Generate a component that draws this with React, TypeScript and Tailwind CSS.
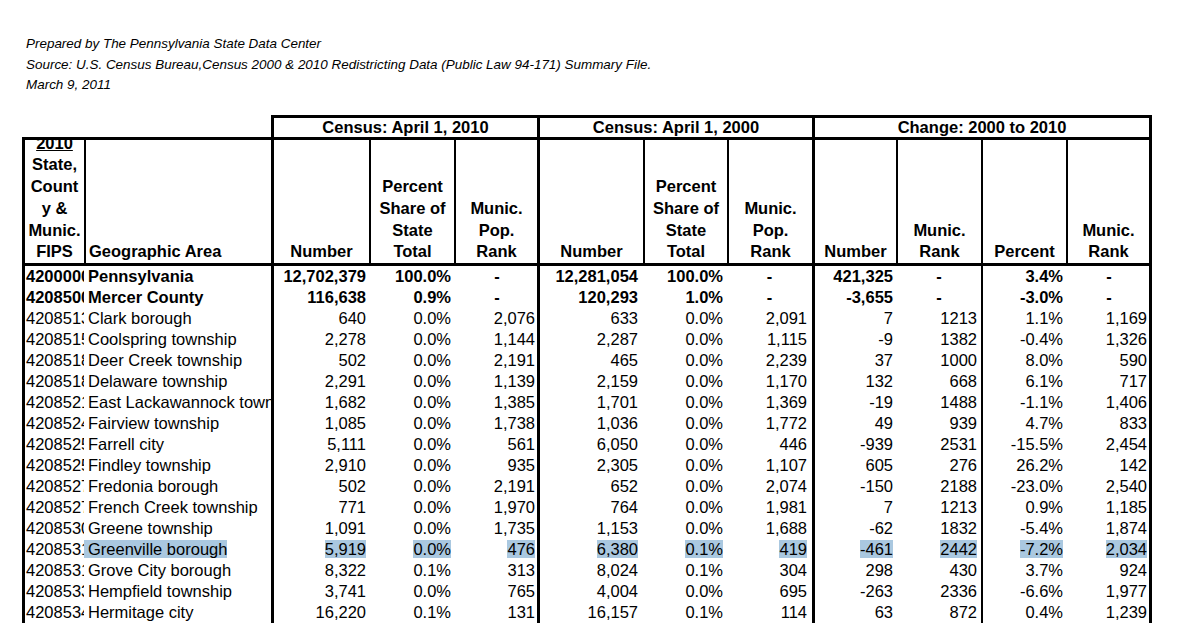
import React from "react";

type Row = {
  fips: string;
  name: string;
  v: string[];
  bold?: boolean;
  hl?: boolean;
};

const rows: Row[] = [
  { fips: "4200000000", name: "Pennsylvania", v: ["12,702,379", "100.0%", "-", "12,281,054", "100.0%", "-", "421,325", "-", "3.4%", "-"], bold: true },
  { fips: "4208500000", name: "Mercer County", v: ["116,638", "0.9%", "-", "120,293", "1.0%", "-", "-3,655", "-", "-3.0%", "-"], bold: true },
  { fips: "4208513784", name: "Clark borough", v: ["640", "0.0%", "2,076", "633", "0.0%", "2,091", "7", "1213", "1.1%", "1,169"] },
  { fips: "4208515560", name: "Coolspring township", v: ["2,278", "0.0%", "1,144", "2,287", "0.0%", "1,115", "-9", "1382", "-0.4%", "1,326"] },
  { fips: "4208518392", name: "Deer Creek township", v: ["502", "0.0%", "2,191", "465", "0.0%", "2,239", "37", "1000", "8.0%", "590"] },
  { fips: "4208518936", name: "Delaware township", v: ["2,291", "0.0%", "1,139", "2,159", "0.0%", "1,170", "132", "668", "6.1%", "717"] },
  { fips: "4208521248", name: "East Lackawannock township", v: ["1,682", "0.0%", "1,385", "1,701", "0.0%", "1,369", "-19", "1488", "-1.1%", "1,406"] },
  { fips: "4208524416", name: "Fairview township", v: ["1,085", "0.0%", "1,738", "1,036", "0.0%", "1,772", "49", "939", "4.7%", "833"] },
  { fips: "4208525112", name: "Farrell city", v: ["5,111", "0.0%", "561", "6,050", "0.0%", "446", "-939", "2531", "-15.5%", "2,454"] },
  { fips: "4208525744", name: "Findley township", v: ["2,910", "0.0%", "935", "2,305", "0.0%", "1,107", "605", "276", "26.2%", "142"] },
  { fips: "4208527720", name: "Fredonia borough", v: ["502", "0.0%", "2,191", "652", "0.0%", "2,074", "-150", "2188", "-23.0%", "2,540"] },
  { fips: "4208527960", name: "French Creek township", v: ["771", "0.0%", "1,970", "764", "0.0%", "1,981", "7", "1213", "0.9%", "1,185"] },
  { fips: "4208530800", name: "Greene township", v: ["1,091", "0.0%", "1,735", "1,153", "0.0%", "1,688", "-62", "1832", "-5.4%", "1,874"] },
  { fips: "4208531136", name: "Greenville borough", v: ["5,919", "0.0%", "476", "6,380", "0.1%", "419", "-461", "2442", "-7.2%", "2,034"], hl: true },
  { fips: "4208531296", name: "Grove City borough", v: ["8,322", "0.1%", "313", "8,024", "0.1%", "304", "298", "430", "3.7%", "924"] },
  { fips: "4208533048", name: "Hempfield township", v: ["3,741", "0.0%", "765", "4,004", "0.0%", "695", "-263", "2336", "-6.6%", "1,977"] },
  { fips: "4208534064", name: "Hermitage city", v: ["16,220", "0.1%", "131", "16,157", "0.1%", "114", "63", "872", "0.4%", "1,239"] },
];

// classes for value columns (col2..col11)
const valCls = [
  "border-l-[3px] border-black pr-[3px]",
  "pr-[3px]",
  "pr-[2px]",
  "border-l-[3px] border-black pr-[5px]",
  "pr-[4px]",
  "pr-[5px]",
  "border-l-[3px] border-black pr-[3px]",
  "pr-[4px]",
  "border-l-2 border-black pr-[3px]",
  "border-r-[3px] border-black pr-[2px]",
];

const GRID =
  "grid grid-cols-[62px_187px_98px_85px_83px_106px_84px_85px_84px_85px_85px_86px]";

function HeadCell({ lines, cls }: { lines: React.ReactNode[]; cls: string }) {
  return (
    <div className={`flex flex-col justify-end items-center text-center overflow-hidden ${cls}`}>
      {lines.map((l, i) => (
        <div key={i} className="whitespace-nowrap">
          {l}
        </div>
      ))}
    </div>
  );
}

export default function App() {
  return (
    <div className="w-[1184px] h-[623px] overflow-hidden bg-white text-black font-['Liberation_Sans',Arial,Helvetica,sans-serif]">
      <div className="pl-[22px] pt-[34px]">
        <div className="pl-[4px] italic text-[13.45px] leading-[20.5px]">
          <div>Prepared by The Pennsylvania State Data Center</div>
          <div>Source: U.S. Census Bureau,Census 2000 &amp; 2010 Redistricting Data (Public Law 94-171) Summary File.</div>
          <div>March 9, 2011</div>
        </div>

        <div className="mt-[19.5px] w-[1130px] text-[16.5px]">
          {/* group header row */}
          <div className={`${GRID} h-[22px] font-bold leading-[19px]`}>
            <div className="col-span-2" />
            <div className="col-span-3 border-l-[3px] border-t-[3px] border-black text-center">Census: April 1, 2010</div>
            <div className="col-span-3 border-l-[3px] border-t-[3px] border-black text-center">Census: April 1, 2000</div>
            <div className="col-span-4 border-l-[3px] border-t-[3px] border-r-[3px] border-black text-center">Change: 2000 to 2010</div>
          </div>

          {/* column header row */}
          <div className={`${GRID} h-[129px] border-y-[3px] border-black font-bold leading-[21.7px]`}>
            <HeadCell
              cls="border-l-[3px] border-black"
              lines={[<span className="underline">2010</span>, "State,", "Count", "y &", "Munic.", "FIPS"]}
            />
            <div className="border-l-2 border-black flex flex-col justify-end pl-[3px]">
              <div className="whitespace-nowrap">Geographic Area</div>
            </div>
            <HeadCell cls="border-l-[3px] border-black" lines={["Number"]} />
            <HeadCell cls="border-l-2 border-black" lines={["Percent", "Share of", "State", "Total"]} />
            <HeadCell cls="border-l-2 border-black" lines={["Munic.", "Pop.", "Rank"]} />
            <HeadCell cls="border-l-[3px] border-black" lines={["Number"]} />
            <HeadCell cls="border-l-2 border-black" lines={["Percent", "Share of", "State", "Total"]} />
            <HeadCell cls="border-l-2 border-black" lines={["Munic.", "Pop.", "Rank"]} />
            <HeadCell cls="border-l-[3px] border-black" lines={["Number"]} />
            <HeadCell cls="border-l-2 border-black" lines={["Munic.", "Rank"]} />
            <HeadCell cls="border-l-2 border-black" lines={["Percent"]} />
            <HeadCell cls="border-l-2 border-r-[3px] border-black" lines={["Munic.", "Rank"]} />
          </div>

          {/* data rows */}
          {rows.map((r, ri) => (
            <div key={ri} className={`${GRID} h-[21px] leading-[21px] ${r.bold ? "font-bold" : ""}`}>
              <div className="border-l-[3px] border-black pl-[1px] overflow-hidden whitespace-nowrap">{r.fips}</div>
              <div className={`overflow-hidden whitespace-nowrap ${r.hl ? "" : "pl-[4px]"}`}>
                {r.hl ? <span className="bg-[#aac8e0] pl-[4px]">{r.name}</span> : r.name}
              </div>
              {r.v.map((val, ci) => {
                const isDash = val === "-";
                return (
                  <div
                    key={ci}
                    className={`whitespace-nowrap ${valCls[ci]} ${isDash ? "text-center pl-[5px]" : "text-right"}`}
                  >
                    {r.hl ? <span className="bg-[#aac8e0]">{val}</span> : val}
                  </div>
                );
              })}
            </div>
          ))}
        </div>
      </div>
    </div>
  );
}
